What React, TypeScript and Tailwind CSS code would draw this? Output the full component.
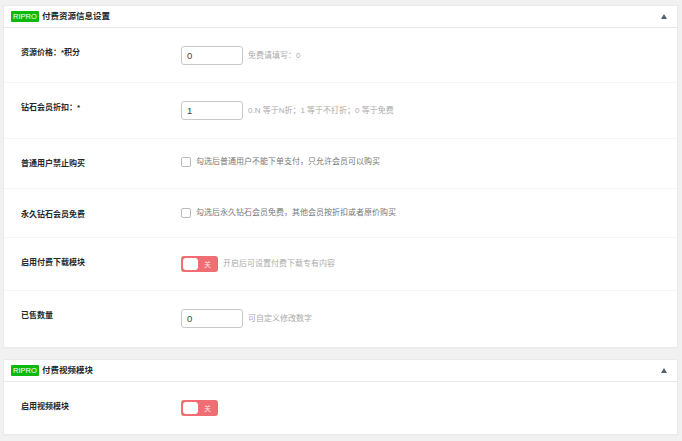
const FONT = "font-['Liberation_Sans','Noto_Sans_CJK_SC',sans-serif]";

function Caret() {
  return (
    <svg width="6" height="5" viewBox="0 0 6 5" className="shrink-0">
      <path d="M3 0L6 5H0Z" fill="#555d66" />
    </svg>
  );
}

function Header({ title }: { title: string }) {
  return (
    <div className="flex h-[22px] items-center border-b border-[#e8e8e8] pl-[7px] pr-[10px]">
      <span className="flex h-[11px] w-[28px] items-center justify-center rounded-[1px] bg-[#0cb90c] text-[7.5px] leading-none text-white">
        RIPRO
      </span>
      <h2 className="ml-[3px] flex-1 text-[8.5px] font-bold leading-none text-[#23282d]">{title}</h2>
      <Caret />
    </div>
  );
}

function Row({
  label,
  height,
  top,
  border = true,
  children,
}: {
  label: string;
  height: string;
  top: string;
  border?: boolean;
  children: React.ReactNode;
}) {
  return (
    <div className={`flex ${height} ${top} pl-[17px] ${border ? "border-b border-[#f5f5f5]" : ""}`}>
      <div className="w-[160px] pt-[1px] text-[8px] font-bold leading-[12px] text-[#23282d]">{label}</div>
      <div className="flex h-fit items-center">{children}</div>
    </div>
  );
}

function NumberInput({ value, hint }: { value: string; hint: string }) {
  return (
    <>
      <div className="flex h-[19px] w-[62px] items-center rounded-[3px] border border-[#c8c8c8] bg-white pl-[5px] text-[9.5px] leading-none text-[#444]">
        {value}
      </div>
      <span className="ml-[5px] text-[8px] leading-none text-[#aaa]">{hint}</span>
    </>
  );
}

function Check({ text }: { text: string }) {
  return (
    <>
      <span className="h-[10px] w-[10px] rounded-[2px] border border-[#bbb] bg-white" />
      <span className="ml-[5px] text-[8px] leading-none text-[#777]">{text}</span>
    </>
  );
}

function Switch() {
  return (
    <span className="flex h-[16px] w-[37px] items-center justify-between rounded-[3px] bg-[#ee6e73] pl-[2px] pr-[7px]">
      <span className="h-[12px] w-[15px] rounded-[3px] bg-white" />
      <span className="text-[7px] leading-none text-[#fde3e3]">关</span>
    </span>
  );
}

export default function App() {
  return (
    <div className={`${FONT} flex h-[441px] w-[682px] flex-col overflow-hidden bg-[#f1f1f1] pl-[4px] pr-[5px] pt-[6px]`}>
      <section className="h-[341px] bg-white shadow-[0_1px_1px_rgba(0,0,0,0.08)] outline outline-[#eaeaea]">
        <Header title="付费资源信息设置" />
        <Row label="资源价格：*积分" height="h-[55px]" top="pt-[18px]">
          <NumberInput value="0" hint="免费请填写：0" />
        </Row>
        <Row label="钻石会员折扣：*" height="h-[56px]" top="pt-[18px]">
          <NumberInput value="1" hint="0.N 等于N折；1 等于不打折；0 等于免费" />
        </Row>
        <Row label="普通用户禁止购买" height="h-[50px]" top="pt-[18px]">
          <Check text="勾选后普通用户不能下单支付，只允许会员可以购买" />
        </Row>
        <Row label="永久钻石会员免费" height="h-[49px]" top="pt-[19px]">
          <Check text="勾选后永久钻石会员免费，其他会员按折扣或者原价购买" />
        </Row>
        <Row label="启用付费下载模块" height="h-[53px]" top="pt-[18px]">
          <Switch />
          <span className="ml-[5px] text-[8px] leading-none text-[#aaa]">开启后可设置付费下载专有内容</span>
        </Row>
        <Row label="已售数量" height="h-[55px]" top="pt-[18px]" border={false}>
          <NumberInput value="0" hint="可自定义修改数字" />
        </Row>
      </section>
      <section className="mt-[13px] h-[74px] bg-white shadow-[0_1px_1px_rgba(0,0,0,0.08)] outline outline-[#eaeaea]">
        <Header title="付费视频模块" />
        <Row label="启用视频模块" height="h-[52px]" top="pt-[18px]" border={false}>
          <Switch />
        </Row>
      </section>
    </div>
  );
}
